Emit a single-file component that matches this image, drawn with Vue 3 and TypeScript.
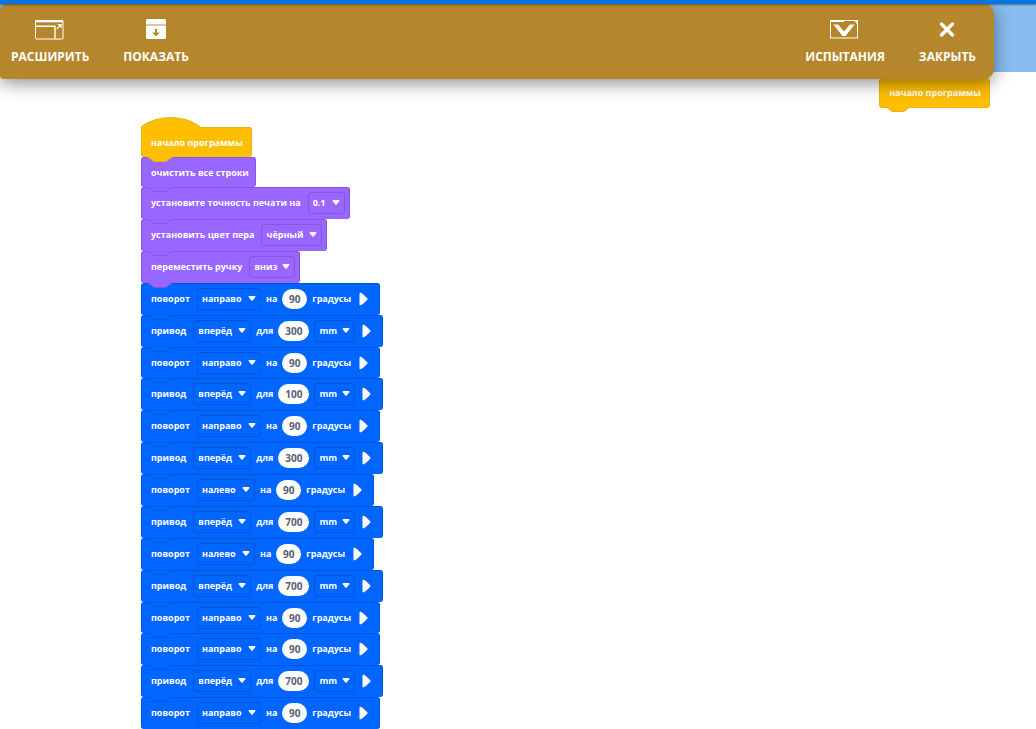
<script setup lang="ts">
import { reactive } from 'vue'

type Part =
  | { kind: 'text'; text: string }
  | { kind: 'select'; value: string; options: string[]; label: string; size: string }
  | { kind: 'number'; value: string; label: string; size: string }
  | { kind: 'expand' }

interface Block {
  tone: 'event' | 'pen' | 'drive'
  parts: Part[]
}

const text = (value: string): Part => ({ kind: 'text', text: value })

function turn(direction: string): Block {
  return {
    tone: 'drive',
    parts: [
      text('поворот'),
      {
        kind: 'select',
        value: direction,
        options: ['направо', 'налево'],
        label: 'направление поворота',
        size: direction === 'направо' ? 'w-right' : 'w-left',
      },
      text('на'),
      { kind: 'number', value: '90', label: 'угол', size: 'two' },
      text('градусы'),
      { kind: 'expand' },
    ],
  }
}

function drive(distance: string): Block {
  return {
    tone: 'drive',
    parts: [
      text('привод'),
      { kind: 'select', value: 'вперёд', options: ['вперёд', 'назад'], label: 'направление', size: 'w-forward' },
      text('для'),
      { kind: 'number', value: distance, label: 'расстояние', size: 'three' },
      { kind: 'select', value: 'mm', options: ['mm'], label: 'единицы', size: 'w-unit' },
      { kind: 'expand' },
    ],
  }
}

const setup = reactive<Block[]>([
  { tone: 'pen', parts: [text('очистить все строки')] },
  {
    tone: 'pen',
    parts: [
      text('установите точность печати на'),
      { kind: 'select', value: '0.1', options: ['1', '0.1', '0.01'], label: 'точность', size: 'w-precision' },
    ],
  },
  {
    tone: 'pen',
    parts: [
      text('установить цвет пера'),
      { kind: 'select', value: 'чёрный', options: ['чёрный'], label: 'цвет', size: 'w-color' },
    ],
  },
  {
    tone: 'pen',
    parts: [
      text('переместить ручку'),
      { kind: 'select', value: 'вниз', options: ['вниз', 'вверх'], label: 'положение', size: 'w-pen' },
    ],
  },
])

const moves = reactive<Block[]>([
  turn('направо'),
  drive('300'),
  turn('направо'),
  drive('100'),
  turn('направо'),
  drive('300'),
  turn('налево'),
  drive('700'),
  turn('налево'),
  drive('700'),
  turn('направо'),
  turn('направо'),
  drive('700'),
  turn('направо'),
])

const groups = [
  { name: 'setup', blocks: setup },
  { name: 'moves', blocks: moves },
]
</script>

<template>
  <div class="app">
    <div class="strip"></div>
    <header class="header">
      <nav class="toolbar">
        <div class="side">
          <button class="tool" type="button">
            <svg width="30" height="22" viewBox="0 0 30 22" fill="none" stroke="#fff">
              <rect x="0.5" y="1.5" width="27.5" height="18.5" rx="1" />
              <path d="M0.5 2.2H28" stroke-width="2.2" />
              <path d="M0.5 7.3H20V20" stroke-width="1.4" />
              <path d="M21.8 9.8L25.6 6M22.8 5.6H26V8.8" stroke-width="1.2" />
            </svg>
            <span>РАСШИРИТЬ</span>
          </button>
          <button class="tool" type="button">
            <svg width="30" height="22" viewBox="0 0 30 22">
              <path d="M6.5 0H23.5Q25 0 25 1.5V18.5Q25 20 23.5 20H6.5Q5 20 5 18.5V1.5Q5 0 6.5 0Z" fill="#fff" />
              <path d="M5 6H25" stroke="#dcc69c" stroke-width="2" />
              <path d="M14 10H16V13.5H18.6L15 17.5L11.4 13.5H14Z" fill="#b5862c" />
            </svg>
            <span>ПОКАЗАТЬ</span>
          </button>
        </div>
        <div class="side">
          <button class="tool" type="button">
            <svg width="30" height="22" viewBox="0 0 30 22">
              <rect x="0.5" y="1.5" width="27" height="17.5" fill="none" stroke="#fff" />
              <path d="M0 1H14V3H0ZM24.5 1H28V4.5H26V3H24.5Z" fill="#fff" />
              <path d="M3.5 5.5H8L14 12.5L20 5.5H24.5L15.5 17H12.5Z" fill="#fff" />
            </svg>
            <span>ИСПЫТАНИЯ</span>
          </button>
          <button class="tool" type="button">
            <svg width="30" height="22" viewBox="0 0 30 22" fill="none" stroke="#fff">
              <path d="M9.5 5L20.5 16M20.5 5L9.5 16" stroke-width="3.4" stroke-linecap="round" />
            </svg>
            <span>ЗАКРЫТЬ</span>
          </button>
        </div>
      </nav>
    </header>

    <main class="workspace">
      <section class="program">
        <div class="block event">
          <svg class="hat" width="64" height="12" viewBox="0 0 64 12">
            <path d="M0.5 12V9.5C17 -2.5 44 -2.5 60 10.5H64V12Z" fill="#ffbf00" />
            <path d="M0.5 12V9.5C17 -2.5 44 -2.5 60 10.5H64" fill="none" stroke="#e8b210" />
          </svg>
          <span class="word">начало программы</span>
          <svg class="tab" width="24" height="7" viewBox="0 0 24 7">
            <path d="M0 0V1.5C3 1.5 4 5.5 7 5.5H17C20 5.5 21 1.5 24 1.5V0Z" />
            <path class="edge" d="M0 1.5C3 1.5 4 5.5 7 5.5H17C20 5.5 21 1.5 24 1.5" />
          </svg>
        </div>
        <div v-for="group in groups" :key="group.name" :class="group.name">
          <div v-for="(block, i) in group.blocks" :key="i" class="block" :class="block.tone">
            <template v-for="(part, j) in block.parts" :key="j">
              <span v-if="part.kind === 'text'" class="word">{{ part.text }}</span>
              <span v-else-if="part.kind === 'select'" class="picker" :class="part.size">
                <select v-model="part.value" :aria-label="part.label">
                  <option v-for="option in part.options" :key="option">{{ option }}</option>
                </select>
                <svg class="caret" width="8" height="5" viewBox="0 0 8 5">
                  <path d="M1.2 0H6.8Q8 0.3 7.2 1.3L4.6 4.4Q4 5 3.4 4.4L0.8 1.3Q0 0.3 1.2 0Z" fill="#fff" />
                </svg>
              </span>
              <input
                v-else-if="part.kind === 'number'"
                v-model="part.value"
                type="text"
                inputmode="numeric"
                class="number"
                :class="part.size"
                :aria-label="part.label"
              />
              <button v-else class="expand" type="button" aria-label="развернуть">
                <svg width="9" height="14" viewBox="0 0 9 14">
                  <path d="M0.5 1.5Q0.5 0.3 2 0.8Q3.6 1.6 8.3 6.3Q9 7 8.3 7.7Q3.6 12.4 2 13.2Q0.5 13.7 0.5 12.5Z" fill="#fff" />
                </svg>
              </button>
            </template>
            <svg class="tab" width="24" height="7" viewBox="0 0 24 7">
              <path d="M0 0V1.5C3 1.5 4 5.5 7 5.5H17C20 5.5 21 1.5 24 1.5V0Z" />
              <path class="edge" d="M0 1.5C3 1.5 4 5.5 7 5.5H17C20 5.5 21 1.5 24 1.5" />
            </svg>
          </div>
        </div>
      </section>

      <aside class="spare">
        <div class="block event">
          <span class="word">начало программы</span>
          <svg class="tab" width="24" height="7" viewBox="0 0 24 7">
            <path d="M0 0V1.5C3 1.5 4 5.5 7 5.5H17C20 5.5 21 1.5 24 1.5V0Z" />
            <path class="edge" d="M0 1.5C3 1.5 4 5.5 7 5.5H17C20 5.5 21 1.5 24 1.5" />
          </svg>
        </div>
      </aside>
    </main>
  </div>
</template>

<style>
body {
  background: #fff;
}
</style>

<style scoped>
.app {
  height: 100vh;
  overflow: hidden;
  display: flex;
  flex-direction: column;
  font-family: "Open Sans", "Noto Sans", sans-serif;
}
.strip {
  flex: none;
  height: 4px;
  background: #0a74e0;
  position: relative;
  z-index: 3;
  box-shadow: 0 1px 2px rgba(0, 0, 0, 0.4);
}
.header {
  flex: none;
  height: 68px;
  padding-right: 42px;
  background: #88bcf1;
  position: relative;
  z-index: 2;
}
.toolbar {
  height: 75px;
  box-sizing: border-box;
  padding: 15px 11px 0 4px;
  display: flex;
  justify-content: space-between;
  background: #b5862c;
  border-radius: 8px 10px 10px 4px;
  box-shadow: 0 4px 18px rgba(0, 0, 0, 0.45);
}
.side {
  display: flex;
  gap: 20px;
}
.tool {
  border: 0;
  padding: 0 7px;
  background: none;
  color: #fff;
  font: bold 12px/18px "Open Sans", "Noto Sans", sans-serif;
  display: flex;
  flex-direction: column;
  align-items: center;
  align-self: flex-start;
  gap: 7px;
  cursor: pointer;
}
.workspace {
  flex: 1;
  min-height: 0;
  display: flex;
  justify-content: space-between;
  align-items: flex-start;
}
.program {
  margin: 55px 0 0 141px;
}
.spare {
  margin: 6px 46px 0 0;
}
.block {
  position: relative;
  box-sizing: border-box;
  width: fit-content;
  height: 32px;
  padding: 0 4px 1px 9px;
  display: flex;
  align-items: center;
  gap: 5px;
  border: 1px solid var(--edge);
  border-bottom: 0;
  border-radius: 3px;
  background: var(--fill);
  color: #fff;
  font-size: 9px;
  font-weight: bold;
  line-height: 14px;
  white-space: nowrap;
}
.event {
  --fill: #ffbf00;
  --edge: #e8b210;
  height: 30px;
  padding-bottom: 0;
  padding-right: 6px;
}
.pen {
  --fill: #9966ff;
  --edge: #8257e0;
}
.drive {
  --fill: #0066ff;
  --edge: #0056d8;
}
.setup .block:first-child {
  height: 30px;
  padding-bottom: 0;
}
.moves .block:nth-child(8n + 3) {
  height: 31px;
}
.spare .block {
  border-bottom: 1px solid var(--edge);
}
.word:first-of-type {
  padding-right: 2px;
}
.hat {
  position: absolute;
  left: -1px;
  top: -11px;
}
.tab {
  position: absolute;
  left: 6px;
  bottom: -6px;
  z-index: 1;
  fill: var(--fill);
}
.edge {
  fill: none;
  stroke: var(--edge);
}
.picker {
  position: relative;
  flex: none;
}
.picker select {
  appearance: none;
  display: block;
  box-sizing: border-box;
  width: 100%;
  height: 22px;
  margin: 0;
  padding: 0 0 0 4px;
  border: 1px solid var(--edge);
  border-radius: 3px;
  background: var(--fill);
  color: #fff;
  font: bold 9px/14px "Open Sans", "Noto Sans", sans-serif;
}
.caret {
  position: absolute;
  right: 5px;
  top: 8px;
  pointer-events: none;
}
.w-right { width: 64px; }
.w-left { width: 58px; }
.w-forward { width: 58px; }
.w-unit { width: 41px; }
.w-precision { width: 37px; }
.w-color { width: 61px; }
.w-pen { width: 46px; }
.number {
  box-sizing: border-box;
  height: 20px;
  padding: 0;
  border: 0;
  border-radius: 10px;
  background: #fff;
  color: #575e75;
  font: bold 10px/14px "Open Sans", "Noto Sans", sans-serif;
  text-align: center;
}
.two { width: 25px; }
.three { width: 31px; }
.expand {
  margin: 0 7px 0 2px;
  padding: 0;
  border: 0;
  background: none;
  display: flex;
  cursor: pointer;
}
.word + .expand {
  margin-left: 3px;
}
</style>
